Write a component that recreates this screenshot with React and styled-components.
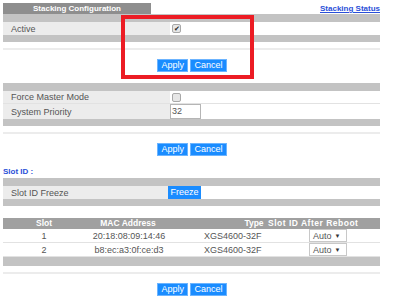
import styled, { createGlobalStyle } from "styled-components"

const GlobalStyle = createGlobalStyle`
    html, body {
        margin: 0;
        padding: 0;
        background: #ffffff;
    }
    body {
        font-family: "Liberation Sans", Arial, sans-serif;
        font-size: 9px;
        color: #555555;
    }
`

const Page = styled.div`
    position: relative;
    width: 377px;
    padding: 3px 3px 10px;
`

const TitleBar = styled.div`
    display: flex;
    justify-content: space-between;
    align-items: flex-end;
`

const Tab = styled.div`
    width: 148px;
    height: 11px;
    line-height: 11px;
    background: #8e8e8e;
    color: #ffffff;
    font-weight: 700;
    font-size: 8px;
    text-align: center;
`

const StatusLink = styled.a`
    color: #2a4fd8;
    font-weight: 700;
    font-size: 8px;
    text-decoration: underline;
    margin-bottom: 1px;
`

const Panel = styled.div`
    background: #c3c3c3;
    padding: 8px 0 7px;
    margin-top: ${p => p.$top || 0}px;
`

const Row = styled.div`
    display: grid;
    grid-template-columns: 167px 1fr;
    min-height: ${p => p.$h || 13}px;
    background: #ffffff;
    border-bottom: 1px solid #e2e2e2;
    box-sizing: border-box;

    &:last-child {
        border-bottom: 0;
    }
`

const Label = styled.div`
    background: #ececec;
    padding-left: 8px;
    display: flex;
    align-items: center;
`

const Value = styled.div`
    display: flex;
    align-items: center;
    padding-left: ${p => p.$pad ?? 2}px;
`

const Check = styled.span`
    display: inline-flex;
    align-items: center;
    justify-content: center;
    width: 7px;
    height: 7px;
    border: 1px solid #a8a8a8;
    border-radius: 2px;
    background: #e6e6e6;
    font-size: 7px;
    line-height: 7px;
    color: #222222;
`

const TextInput = styled.div`
    width: 28px;
    height: 13px;
    line-height: 13px;
    border: 1px solid #b5b5b5;
    background: #ffffff;
    padding-left: 1px;
    color: #555555;
`

const Divider = styled.div`
    height: 2px;
    background: #ececec;
    margin-top: 6px;
`

const ButtonBar = styled.div`
    display: flex;
    justify-content: center;
    gap: 2px;
    margin-top: 9px;
`

const Button = styled.button`
    height: 13px;
    padding: 0 4px;
    border: 1px solid #6cb4ff;
    background: #1a8cff;
    color: #ffffff;
    font-family: "Liberation Sans", Arial, sans-serif;
    font-size: 9px;
    line-height: 11px;
    cursor: pointer;
    width: ${p => p.$w}px;
`

const FreezeButton = styled(Button)`
    border: 0;
    width: 33px;
    padding: 0;
    margin-left: -2px;
`

const SectionLabel = styled.div`
    margin-top: 10px;
    color: #2a4fd8;
    font-weight: 700;
    font-size: 8px;
    height: 12px;
    line-height: 12px;
`

const Table = styled.div`
    background: #c3c3c3;
    padding-bottom: 9px;
    margin-top: 12px;
`

const HeadRow = styled.div`
    display: grid;
    grid-template-columns: 82px 86px 73px 20px 1fr;
    height: 11px;
    line-height: 11px;
    background: #a0a0a0;
    color: #ffffff;
    font-weight: 700;
    font-size: 8.5px;
    white-space: nowrap;
`

const HeadCell = styled.div`
    display: flex;
    justify-content: ${p => p.$align === "left" ? "flex-start" : "center"};
    padding-left: ${p => p.$pad || 0}px;
    letter-spacing: ${p => p.$spread || 0}px;
`

const DataRow = styled.div`
    display: grid;
    grid-template-columns: 82px 88px 136px 1fr;
    height: 14px;
    align-items: center;
    background: #ffffff;
    border-bottom: 1px solid #e2e2e2;
    box-sizing: border-box;
`

const Cell = styled.div`
    text-align: ${p => p.$align || "center"};
    padding-left: ${p => p.$pad || 0}px;
`

const Select = styled.div`
    display: flex;
    align-items: center;
    gap: 3px;
    width: 33px;
    height: 11px;
    border: 1px solid #c8c8c8;
    padding-left: 3px;
    background: #ffffff;
    color: #555555;

    span {
        font-size: 6px;
        color: #333333;
    }
`

const Highlight = styled.div`
    position: absolute;
    left: 121px;
    top: 15px;
    width: 133px;
    height: 64px;
    box-sizing: border-box;
    border: 4px solid #ec1c24;
    pointer-events: none;
`

const slots = [
    { slot: 1, mac: "20:18:08:09:14:46", type: "XGS4600-32F" },
    { slot: 2, mac: "b8:ec:a3:0f:ce:d3", type: "XGS4600-32F" }
]

const Buttons = () => (
    <ButtonBar>
        <Button $w={31}>Apply</Button>
        <Button $w={37}>Cancel</Button>
    </ButtonBar>
)

const App = () => {
    return (
        <Page>
            <GlobalStyle/>
            <TitleBar>
                <Tab>Stacking Configuration</Tab>
                <StatusLink href="#">Stacking Status</StatusLink>
            </TitleBar>

            <Panel>
                <Row>
                    <Label>Active</Label>
                    <Value><Check>✔</Check></Value>
                </Row>
            </Panel>
            <Divider/>
            <Buttons/>

            <Panel $top={11}>
                <Row>
                    <Label>Force Master Mode</Label>
                    <Value><Check/></Value>
                </Row>
                <Row $h={15}>
                    <Label>System Priority</Label>
                    <Value $pad={0}><TextInput>32</TextInput></Value>
                </Row>
            </Panel>
            <Divider/>
            <Buttons/>

            <SectionLabel>Slot ID :</SectionLabel>
            <Panel>
                <Row>
                    <Label>Slot ID Freeze</Label>
                    <Value $pad={0}><FreezeButton>Freeze</FreezeButton></Value>
                </Row>
            </Panel>

            <Table>
                <HeadRow>
                    <HeadCell>Slot</HeadCell>
                    <HeadCell>MAC Address</HeadCell>
                    <HeadCell/>
                    <HeadCell>Type</HeadCell>
                    <HeadCell $align="left" $pad={4} $spread={0.5}>Slot ID After Reboot</HeadCell>
                </HeadRow>
                {
                    slots.map(s => (
                        <DataRow key={s.slot}>
                            <Cell>{s.slot}</Cell>
                            <Cell>{s.mac}</Cell>
                            <Cell $align="left" $pad={31}>{s.type}</Cell>
                            <Cell $align="left">
                                <Select>Auto <span>▼</span></Select>
                            </Cell>
                        </DataRow>
                    ))
                }
            </Table>
            <Divider/>
            <Buttons/>

            <Highlight/>
        </Page>
    )
}

export default App
